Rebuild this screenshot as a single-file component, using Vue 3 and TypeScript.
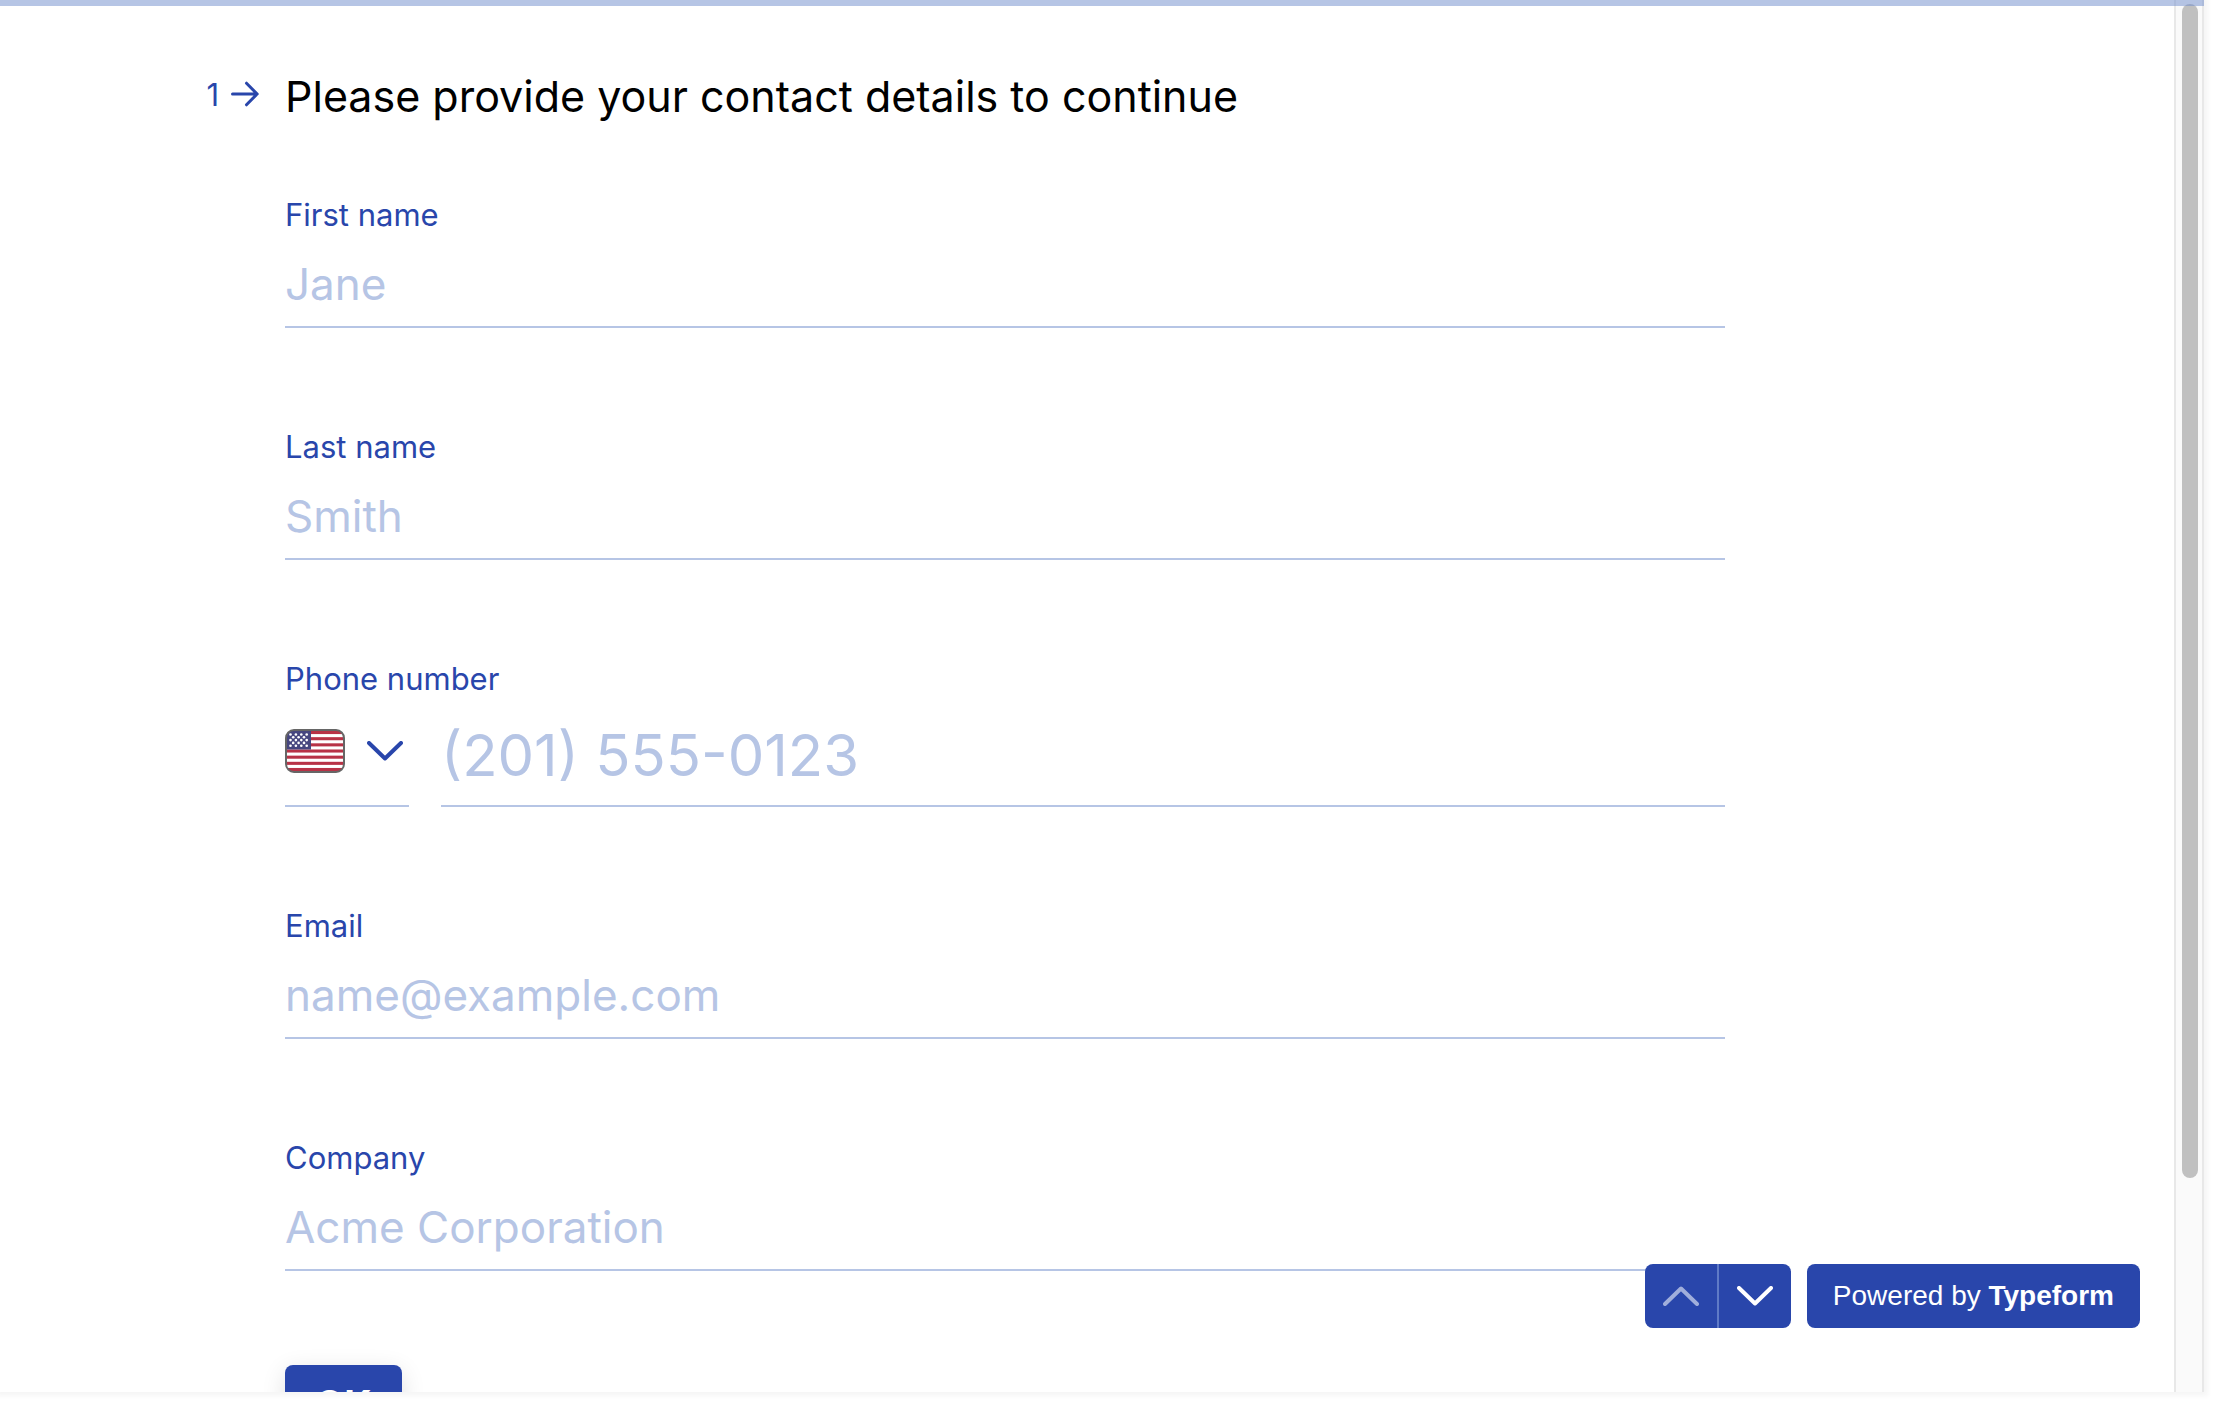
<script setup lang="ts">
import { reactive, ref } from 'vue'

interface Field {
  id: string
  label: string
  placeholder: string
  type: 'text' | 'tel' | 'email'
}

const fields: Field[] = [
  { id: 'first-name', label: 'First name', placeholder: 'Jane', type: 'text' },
  { id: 'last-name', label: 'Last name', placeholder: 'Smith', type: 'text' },
  { id: 'phone', label: 'Phone number', placeholder: '(201) 555-0123', type: 'tel' },
  { id: 'email', label: 'Email', placeholder: 'name@example.com', type: 'email' },
  { id: 'company', label: 'Company', placeholder: 'Acme Corporation', type: 'text' },
]

const answers = reactive<Record<string, string>>({})
const country = ref('US')

const stripes = [0, 2, 4, 6, 8, 10, 12]
const stars = [0, 1, 2, 3, 4].flatMap((row) =>
  (row % 2 ? [0, 1, 2] : [0, 1, 2, 3]).map((col) => ({
    x: (row % 2 ? 8.2 : 5.5) + col * 5.4,
    y: 5.5 + row * 2.8,
  })),
)
</script>

<template>
  <div class="page">
    <div class="window">
      <main class="content">
        <form class="question" @submit.prevent>
          <div class="counter">
            <span>1</span>
            <svg width="28" height="26" viewBox="0 0 28 26" aria-hidden="true">
              <path d="M1.5 13H26M15.5 2.2 26.2 13 15.5 23.8" fill="none" stroke="currentColor" stroke-width="3" stroke-linecap="round" stroke-linejoin="round" />
            </svg>
          </div>
          <h1>Please provide your contact details to continue</h1>

          <div class="fields">
            <div v-for="f in fields" :key="f.id" class="field">
              <label :for="f.id">{{ f.label }}</label>
              <div v-if="f.type === 'tel'" class="phone">
                <div class="country">
                  <svg width="60" height="44" viewBox="0 0 60 44" aria-hidden="true">
                    <defs>
                      <clipPath id="flag-shape"><rect x="1" y="1" width="58" height="42" rx="8" /></clipPath>
                    </defs>
                    <g clip-path="url(#flag-shape)">
                      <rect width="60" height="44" fill="#fff" />
                      <rect v-for="s in stripes" :key="s" x="0" :y="2 + s * 3.08" width="60" height="3.08" fill="#b83246" />
                      <rect width="26" height="20.5" fill="#46467f" />
                      <circle v-for="(s, i) in stars" :key="i" :cx="s.x" :cy="s.y" r="1.3" fill="#fff" />
                    </g>
                    <rect x="1" y="1" width="58" height="42" rx="8" fill="none" stroke="#666" stroke-width="2" />
                  </svg>
                  <svg width="36" height="20" viewBox="0 0 36 20" aria-hidden="true">
                    <path d="M2 2 18 17.5 34 2" fill="none" stroke="currentColor" stroke-width="4" stroke-linecap="round" stroke-linejoin="round" />
                  </svg>
                  <select v-model="country" aria-label="Country">
                    <option value="US">United States</option>
                    <option value="CA">Canada</option>
                  </select>
                </div>
                <input :id="f.id" v-model="answers[f.id]" class="large" type="tel" :placeholder="f.placeholder" />
              </div>
              <input v-else :id="f.id" v-model="answers[f.id]" :type="f.type" :placeholder="f.placeholder" />
            </div>
            <button class="ok" type="submit">OK</button>
          </div>
        </form>

        <footer class="actions">
          <div class="nav">
            <button type="button" disabled aria-label="Previous question">
              <svg width="36" height="20" viewBox="0 0 36 20" aria-hidden="true">
                <path d="M2 18 18 2.5 34 18" fill="none" stroke="currentColor" stroke-width="4" stroke-linecap="round" stroke-linejoin="round" />
              </svg>
            </button>
            <button type="button" aria-label="Next question">
              <svg width="36" height="20" viewBox="0 0 36 20" aria-hidden="true">
                <path d="M2 2 18 17.5 34 2" fill="none" stroke="currentColor" stroke-width="4" stroke-linecap="round" stroke-linejoin="round" />
              </svg>
            </button>
          </div>
          <a class="brand" href="#">Powered by <strong>Typeform</strong></a>
        </footer>
      </main>
      <div class="track"><div class="thumb"></div></div>
      <div class="progress"></div>
    </div>
  </div>
</template>

<style>
body {
  margin: 0;
  background: #fff;
}
</style>

<style scoped>
.page {
  --blue: #2946ab;
  --pale: #b6c5e5;
  box-sizing: border-box;
  height: 100vh;
  padding: 0 14px 28px 0;
  overflow: hidden;
  color: var(--blue);
  font-family: Inter, "Liberation Sans", sans-serif;
}

.window {
  position: relative;
  display: flex;
  height: 100%;
  box-shadow: 0 0 5px 4px #f6f6f6;
}

.content {
  position: relative;
  flex: 1;
  overflow: hidden;
  background: #fff;
}

.question {
  display: grid;
  grid-template-columns: 259px minmax(0, 1440px);
  column-gap: 26px;
  padding-top: 68px;
}

.counter {
  display: flex;
  align-items: center;
  justify-content: flex-end;
  gap: 12px;
  height: 52px;
  font-size: 31px;
}

h1 {
  margin: 0;
  color: #000;
  font-size: 43px;
  font-weight: 400;
  line-height: 56px;
}

.fields {
  grid-column: 2;
  padding-top: 71px;
}

.field {
  margin-bottom: 99px;
}

.field:last-of-type {
  margin-bottom: 94px;
}

label {
  display: block;
  font-size: 31px;
  line-height: 40px;
}

input {
  display: block;
  box-sizing: border-box;
  width: 100%;
  height: 93px;
  padding: 20px 0 14px;
  border: 0;
  border-bottom: 2px solid var(--pale);
  border-radius: 0;
  outline: 0;
  background: none;
  color: var(--blue);
  font-family: inherit;
  font-size: 44px;
}

input::placeholder {
  color: var(--pale);
  opacity: 1;
}

.phone {
  display: flex;
  gap: 32px;
}

.phone .large {
  flex: 1;
  height: 108px;
  font-size: 58px;
}

.country {
  position: relative;
  display: flex;
  align-items: center;
  gap: 22px;
  box-sizing: border-box;
  width: 124px;
  padding-bottom: 2px;
  border-bottom: 2px solid var(--pale);
}

.country select {
  position: absolute;
  inset: 0;
  width: 100%;
  opacity: 0;
  cursor: pointer;
}

button {
  padding: 0;
  border: 0;
  background: var(--blue);
  color: #fff;
  font-family: inherit;
  cursor: pointer;
}

.ok {
  display: block;
  padding: 15px 30px;
  border-radius: 8px;
  box-shadow: 0 6px 24px rgba(0, 0, 0, 0.12);
  font-size: 38px;
  font-weight: 700;
  line-height: 48px;
}

.actions {
  position: absolute;
  right: 34px;
  bottom: 64px;
  display: flex;
  gap: 16px;
}

.nav {
  display: flex;
  overflow: hidden;
  border-radius: 8px;
}

.nav button {
  display: flex;
  align-items: center;
  justify-content: center;
  width: 72px;
  height: 64px;
}

.nav button + button {
  width: 74px;
  border-left: 2px solid #5f7ac6;
}

.nav button:disabled {
  color: #a0aedb;
}

.brand {
  padding: 0 26px;
  border-radius: 8px;
  background: var(--blue);
  color: #fff;
  font-family: "Liberation Sans", Arial, sans-serif;
  font-size: 28px;
  line-height: 64px;
  text-decoration: none;
}

.track {
  box-sizing: border-box;
  width: 30px;
  padding: 4px 4px 0 6px;
  border: solid #e8e8e8;
  border-width: 0 2px;
  background: #fafafa;
}

.thumb {
  height: 1174px;
  max-height: 85%;
  border-radius: 8px;
  background: #c0c0c0;
}

.progress {
  position: absolute;
  inset: 0 0 auto;
  height: 6px;
  background: rgba(109, 139, 204, 0.5);
}
</style>
